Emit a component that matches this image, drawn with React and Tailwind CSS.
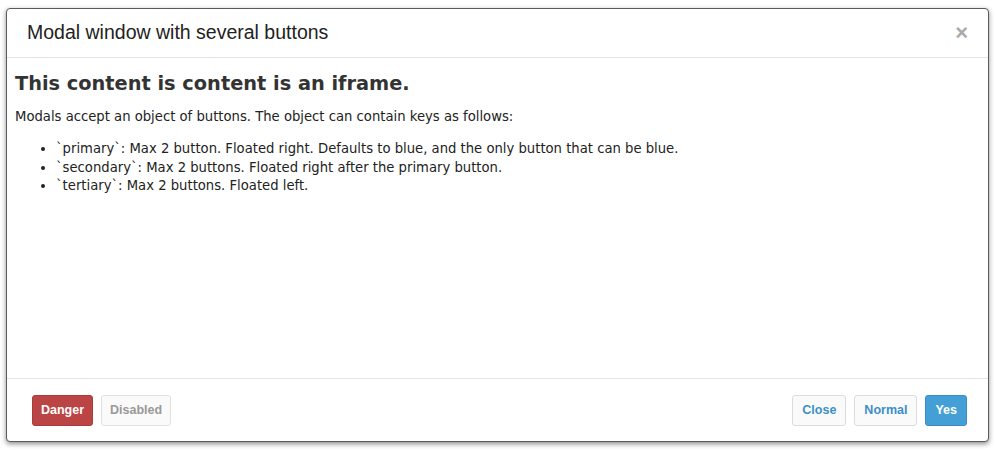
const items = [
  { key: "primary", text: "Max 2 button. Floated right. Defaults to blue, and the only button that can be blue." },
  { key: "secondary", text: "Max 2 buttons. Floated right after the primary button." },
  { key: "tertiary", text: "Max 2 buttons. Floated left." },
];

const btn =
  "h-[31px] rounded-[3px] border text-[12.5px] font-bold leading-none";

export default function App() {
  return (
    <div className="h-[450px] w-[996px] bg-white pl-[6px] pt-[8px]">
      <div className="flex h-[434px] w-[983px] flex-col rounded-[4px] border border-[#5a5a5a] bg-white shadow-[0_2px_5px_rgba(0,0,0,0.45)]">
        <div className="flex h-[49px] items-center justify-between border-b border-[#e5e5e5] pl-[20px] pr-[20px]">
          <h1 className="text-[19.5px] text-[#222] [font-family:'Liberation_Sans',sans-serif]">
            Modal window with several buttons
          </h1>
          <span className="text-[22px] font-bold leading-none text-[#aaa] [font-family:'Liberation_Sans',sans-serif]">
            ×
          </span>
        </div>

        <div className="flex-1 px-[8px] pt-[14px] text-[#222] [font-family:'DejaVu_Sans',Verdana,sans-serif]">
          <h2 className="text-[19.35px] font-bold leading-[24px] text-[#333]">
            This content is content is an iframe.
          </h2>
          <p className="mt-[12px] text-[13.2px] leading-[18px]">
            Modals accept an object of buttons. The object can contain keys as follows:
          </p>
          <ul className="mt-[14px] list-disc pl-[41px] text-[13.2px] leading-[18.5px]">
            {items.map((it) => (
              <li key={it.key}>
                `{it.key}`: {it.text}
              </li>
            ))}
          </ul>
        </div>

        <div className="flex h-[63px] items-center justify-between border-t border-[#e5e5e5] pl-[25px] pr-[21px] [font-family:'Liberation_Sans',sans-serif]">
          <div className="flex gap-[8px]">
            <button className={`${btn} px-[8px] border-[#a83b3b] bg-[#bb4444] text-white`}>Danger</button>
            <button className={`${btn} px-[8px] border-[#e2e2e2] bg-[#fafafa] text-[#999]`}>Disabled</button>
          </div>
          <div className="flex gap-[8px]">
            <button className={`${btn} px-[9px] border-[#dcdcdc] bg-[#fafafa] text-[#3c8fcb]`}>Close</button>
            <button className={`${btn} px-[9px] border-[#dcdcdc] bg-[#fafafa] text-[#3c8fcb]`}>Normal</button>
            <button className={`${btn} px-[9px] border-[#3a8cc4] bg-[#449fd6] text-white`}>Yes</button>
          </div>
        </div>
      </div>
    </div>
  );
}
